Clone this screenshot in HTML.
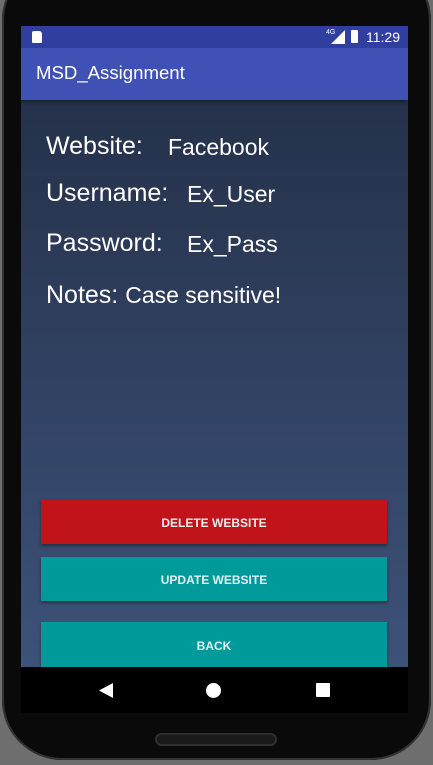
<html><head><style>
body{margin:0;width:433px;height:765px;background:#6e6e6e;overflow:hidden;position:relative;font-family:"Liberation Sans",sans-serif}
.phone{position:absolute;left:2px;top:-40px;width:429px;height:800px;background:#0a0a0a;border-radius:60px;box-shadow:inset 0 0 0 2px #333}
.scr{position:absolute;left:21px;top:26px;width:387px;height:641px;background:linear-gradient(#222d44,#3d5279);overflow:hidden}
.sb{height:22px;background:#303f9f;color:#fff;font-size:13px;position:relative}
.ab{height:52px;background:#3f51b5;color:#fff;font-size:18.6px;line-height:50px;padding-left:15px;box-shadow:0 2px 3px rgba(0,0,0,.4)}
.t{position:absolute;color:#fff;white-space:nowrap}
.btn{position:absolute;left:20px;width:346px;height:44px;color:#e0f0f0;font-weight:bold;font-size:12px;text-align:center;line-height:46px;box-shadow:0 2px 3px rgba(0,0,0,.4)}
.nav{position:absolute;left:21px;top:667px;width:387px;height:46px;background:#000}
</style></head><body>
<div class="phone"></div>
<div class="scr">
<div class="sb"><div style="position:absolute;left:11px;top:5px;width:10px;height:12px;background:#fff;border-radius:2px 3px 1px 1px"></div>
<div style="position:absolute;left:305px;top:3px;font-size:7px">4G</div>
<svg style="position:absolute;left:310px;top:4px" width="14" height="14"><polygon points="14,0 14,14 0,14" fill="#fff"/></svg>
<div style="position:absolute;left:330px;top:4px;width:7px;height:13px;background:#fff;border-radius:1px"></div>
<div style="position:absolute;left:345px;top:3px;font-size:14px">11:29</div></div>
<div class="ab">MSD_Assignment</div>
<div class="t" style="left:25px;top:106px;font-size:25px">Website:</div>
<div class="t" style="left:147px;top:108px;font-size:23px">Facebook</div>
<div class="t" style="left:25px;top:153px;font-size:25px">Username:</div>
<div class="t" style="left:166px;top:155px;font-size:23px">Ex_User</div>
<div class="t" style="left:25px;top:203px;font-size:25px">Password:</div>
<div class="t" style="left:166px;top:205px;font-size:23px">Ex_Pass</div>
<div class="t" style="left:25px;top:255px;font-size:25px">Notes: <span style="font-size:23px">Case sensitive!</span></div>
<div class="btn" style="top:474px;background:#c0141a">DELETE WEBSITE</div>
<div class="btn" style="top:531px;background:#009a9a">UPDATE WEBSITE</div>
<div class="btn" style="top:596px;height:50px;line-height:48px;background:#009a9a">BACK</div>
</div>
<div class="nav">
<svg style="position:absolute;left:78px;top:16px" width="14" height="15"><polygon points="14,0 14,15 0,7.5" fill="#fff"/></svg>
<div style="position:absolute;left:185px;top:16px;width:15px;height:15px;border-radius:50%;background:#fff"></div>
<div style="position:absolute;left:295px;top:16px;width:14px;height:14px;background:#fff;border-radius:1px"></div>
</div>
<div style="position:absolute;left:155px;top:733px;width:122px;height:13px;border-radius:7px;background:#1a1a1a;box-shadow:inset 0 0 0 2px #2e2e2e"></div>
</body></html>
